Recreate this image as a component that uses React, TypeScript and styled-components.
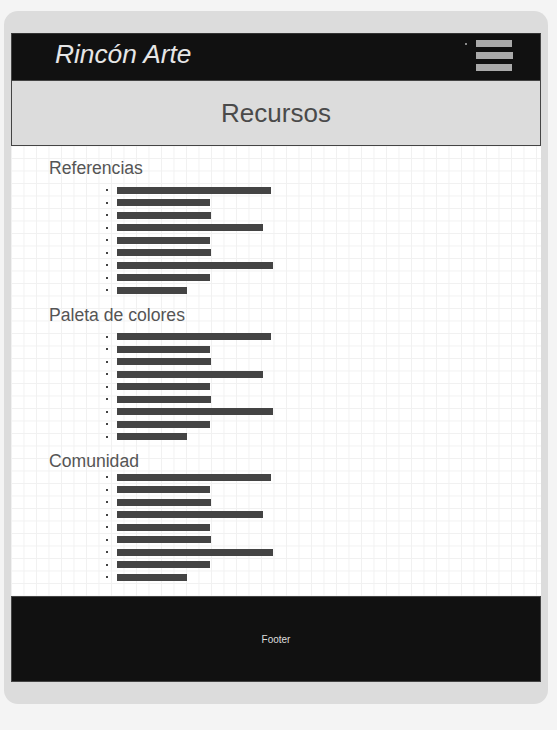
import React from 'react'
import styled, { createGlobalStyle } from 'styled-components'

const GlobalStyle = createGlobalStyle`
  html, body {
    margin: 0;
    padding: 0;
    background: #f4f4f4;
    font-family: "Liberation Sans", Arial, sans-serif;
  }
`

const Frame = styled.div`
  box-sizing: border-box;
  width: 544px;
  margin: 11px 0 26px 4px;
  padding: 22px 7px;
  background: #dcdcdc;
  border-radius: 14px;
`

const Header = styled.header`
  box-sizing: border-box;
  height: 48px;
  display: flex;
  align-items: flex-start;
  justify-content: space-between;
  padding: 5px 27px 0 43px;
  background: #111;
  border: 1px solid #444;
  border-top-color: #333;
`

const Brand = styled.h1`
  margin: 0;
  font-size: 26.3px;
  font-style: italic;
  font-weight: normal;
  line-height: 30px;
  color: #e6e6e6;
`

const MenuWrap = styled.div`
  position: relative;
  display: flex;
  flex-direction: column;
  gap: 5px;
  padding-top: 1px;
`

const Dot = styled.span`
  position: absolute;
  left: -11px;
  top: 4px;
  width: 2px;
  height: 2px;
  background: #8a8a8a;
`

const MenuBar = styled.span<{ $w: number }>`
  display: block;
  width: ${(p) => p.$w}px;
  height: 7px;
  background: #aaa;
`

const TitleBand = styled.div`
  box-sizing: border-box;
  height: 65px;
  display: flex;
  align-items: center;
  justify-content: center;
  background: #dcdcdc;
  border: 1px solid #444;
  border-top: none;
`

const Title = styled.h2`
  margin: 0;
  font-size: 26px;
  font-weight: normal;
  color: #4a4a4a;
`

const Main = styled.main`
  box-sizing: border-box;
  height: 450px;
  padding: 12px 0 0 38px;
  background-color: #fff;
  background-image: linear-gradient(to right, #f1f1f1 1px, transparent 1px),
    linear-gradient(to bottom, #f1f1f1 1px, transparent 1px);
  background-size: 12.5px 12.5px;
  background-position: 0 12px;
`

const SectionTitle = styled.h3`
  margin: 0;
  font-size: 17.6px;
  font-weight: normal;
  line-height: 20px;
  color: #555;
`

const List = styled.ul<{ $tight?: boolean }>`
  list-style: none;
  margin: ${(p) => (p.$tight ? '0 0 8px' : '6px 0 8px')};
  padding: 0 0 0 68px;
`

const Item = styled.li`
  position: relative;
  height: 12.5px;
  display: flex;
  align-items: center;

  &::before {
    content: '';
    position: absolute;
    left: -11px;
    top: 5px;
    width: 2px;
    height: 2px;
    background: #444;
  }
`

const Bar = styled.span<{ $w: number }>`
  display: block;
  width: ${(p) => p.$w}px;
  height: 7px;
  background: #444;
`

const Footer = styled.footer`
  box-sizing: border-box;
  height: 86px;
  display: flex;
  align-items: center;
  justify-content: center;
  background: #111;
  border: 1px solid #444;
  font-size: 10px;
  color: #ddd;
`

const widths = [154, 93, 94, 146, 93, 94, 156, 93, 70]

const sections = [
  { title: 'Referencias' },
  { title: 'Paleta de colores' },
  { title: 'Comunidad', tight: true },
]

export default function App() {
  return (
    <>
      <GlobalStyle />
      <Frame>
        <Header>
          <Brand>Rincón Arte</Brand>
          <MenuWrap>
            <Dot />
            <MenuBar $w={36} />
            <MenuBar $w={37} />
            <MenuBar $w={36} />
          </MenuWrap>
        </Header>
        <TitleBand>
          <Title>Recursos</Title>
        </TitleBand>
        <Main>
          {sections.map((s) => (
            <section key={s.title}>
              <SectionTitle>{s.title}</SectionTitle>
              <List $tight={s.tight}>
                {widths.map((w, i) => (
                  <Item key={i}>
                    <Bar $w={w} />
                  </Item>
                ))}
              </List>
            </section>
          ))}
        </Main>
        <Footer>Footer</Footer>
      </Frame>
    </>
  )
}
